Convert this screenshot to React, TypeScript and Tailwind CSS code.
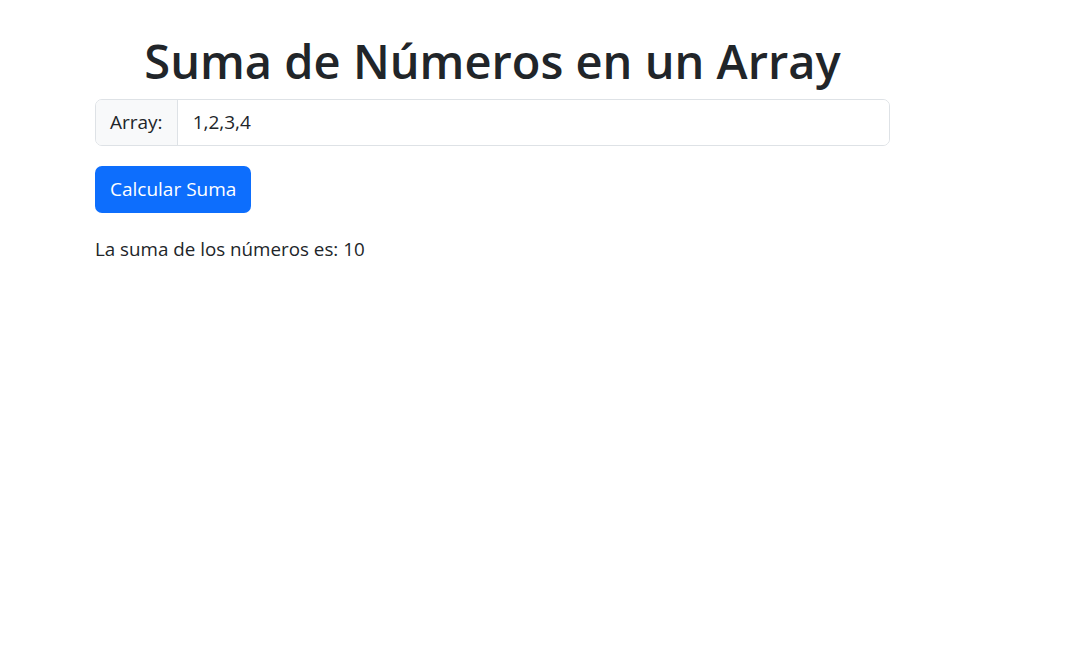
import React, { useState } from 'react';

export default function App() {
  const [value, setValue] = useState('1,2,3,4');
  const total = value
    .split(',')
    .map((n) => Number(n.trim()))
    .filter((n) => !Number.isNaN(n))
    .reduce((a, b) => a + b, 0);

  return (
    <div className="min-h-screen bg-white text-[#212529] font-['Open_Sans',sans-serif]">
      <div className="ml-[95px] w-[795px] pt-[33px]">
        <h1 className="text-center text-[47px] font-semibold leading-[56px] mb-[10px]">
          Suma de Números en un Array
        </h1>
        <div className="flex h-[47px] rounded-[7px] border border-[#dee2e6] overflow-hidden">
          <span className="flex items-center px-[14px] bg-[#f8f9fa] border-r border-[#dee2e6] text-[19px]">
            Array:
          </span>
          <input
            value={value}
            onChange={(e) => setValue(e.target.value)}
            className="flex-1 px-[15px] text-[19px] outline-none bg-white"
          />
        </div>
        <button className="mt-[20px] h-[47px] px-[15px] rounded-[7px] bg-[#0d6efd] text-white text-[19px]">
          Calcular Suma
        </button>
        <p className="mt-[21px] text-[18.8px] leading-[30px]">La suma de los números es: {total}</p>
      </div>
    </div>
  );
}
